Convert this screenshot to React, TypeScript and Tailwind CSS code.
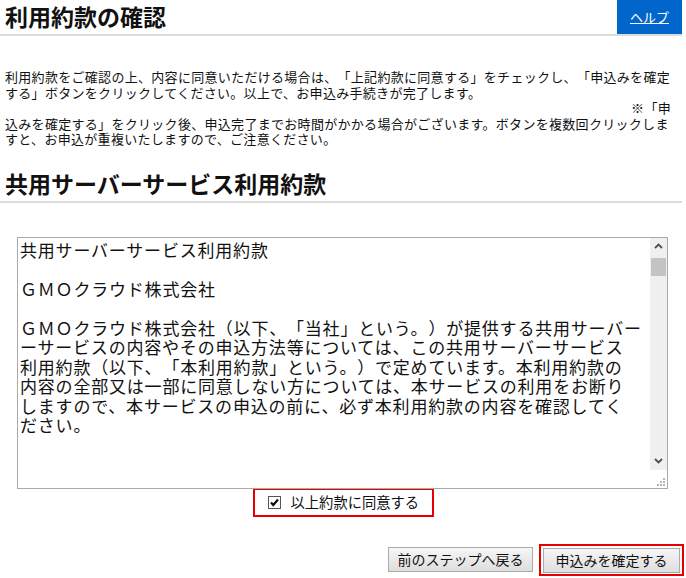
const terms = [
  '共用サーバーサービス利用約款',
  '',
  'ＧＭＯクラウド株式会社',
  '',
  'ＧＭＯクラウド株式会社（以下、「当社」という。）が提供する共用サーバー',
  'ーサービスの内容やその申込方法等については、この共用サーバーサービス',
  '利用約款（以下、「本利用約款」という。）で定めています。本利用約款の',
  '内容の全部又は一部に同意しない方については、本サービスの利用をお断り',
  'しますので、本サービスの申込の前に、必ず本利用約款の内容を確認してく',
  'ださい。',
  '',
  '',
  '',
  '',
  '第１条（適用）',
  '１．本利用約款は、当社が提供する共用サーバーサービスに適用されます。',
  '２．当社が別途定める個別規定は、本利用約款の一部を構成します。',
  '',
  '第２条（定義）',
  '本利用約款において使用する用語の意味は、次の各号に定めるとおりとし',
  'ます。',
  '（１）契約者：本サービスの利用契約を締結した者',
  '（２）利用契約：本利用約款に基づく本サービスの利用に関する契約',
  '（３）申込者：本サービスの利用を申し込む者',
  '',
  '第３条（約款の変更）',
  '当社は、契約者の承諾を得ることなく本利用約款を変更することがありま',
  'す。この場合、本サービスの提供条件は変更後の利用約款によります。',
  '',
  '第４条（通知）',
  '当社から契約者への通知は、当社のウェブサイトへの掲載、電子メールの',
  '送信その他当社が適当と判断する方法により行います。',
  '',
  '第５条（利用申込）',
  '本サービスの利用を希望する者は、本利用約款に同意のうえ、当社所定の',
  '方法により申込みを行うものとします。',
  '',
  '第６条（申込の承諾）',
  '当社は、申込者の申込みを審査のうえ、これを承諾する場合には申込者に',
  '対しその旨を通知します。',
  '',
  '第７条（料金）',
  '契約者は、当社が別に定める料金表に基づき、本サービスの利用料金を支',
  '払うものとします。',
  '',
  '第８条（禁止事項）',
  '契約者は、本サービスの利用にあたり、法令または公序良俗に違反する行',
  '為を行ってはならないものとします。',
  '',
  '附則',
  '本利用約款は、所定の日から実施します。',
].join('\n');

const jp = "font-['Noto_Sans_CJK_JP','Noto_Sans',sans-serif]";

function Chevron({ up }: { up?: boolean }) {
  return (
    <svg width="9" height="6" viewBox="0 0 9 6" className="block">
      <path d={up ? 'M1 5 L4.5 1.5 L8 5' : 'M1 1 L4.5 4.5 L8 1'} fill="none" stroke="#505050" strokeWidth="1.8" />
    </svg>
  );
}

export default function App() {
  return (
    <div className={`w-[686px] bg-white text-black ${jp}`}>
      <div className="flex w-[682px] items-start justify-between border-b-2 border-[#dcdcdc]">
        <h1 className="pl-[5px] text-[23px] font-bold leading-[33px] text-[#111]">利用約款の確認</h1>
        <a href="#" className="flex h-[34px] w-[65px] items-center justify-center bg-[#0066cc] text-[13px] text-white underline">
          ヘルプ
        </a>
      </div>

      <div className="mt-[33px] px-[5px] text-[13px] leading-[15.5px] tracking-[0.3px] text-[#111] [text-spacing-trim:space-all]">
        <div className="whitespace-nowrap">利用約款をご確認の上、内容に同意いただける場合は、「上記約款に同意する」をチェックし、「申込みを確定</div>
        <div className="whitespace-nowrap">する」ボタンをクリックしてください。以上で、お申込み手続きが完了します。</div>
        <div className="pr-[10px] text-right">※「申</div>
        <div className="whitespace-nowrap">込みを確定する」をクリック後、申込完了までお時間がかかる場合がございます。ボタンを複数回クリックしま</div>
        <div className="whitespace-nowrap">すと、お申込が重複いたしますので、ご注意ください。</div>
      </div>

      <h2 className="mt-[21px] w-[682px] border-b-2 border-[#dcdcdc] pb-[3px] pl-[5px] text-[23px] font-bold leading-[30px] text-[#111]">
        共用サーバーサービス利用約款
      </h2>

      <div className="mt-[34px] pl-[17px]">
        <div className="relative h-[252px] w-[651px]">
          <textarea
            readOnly
            wrap="off"
            defaultValue={terms}
            className="block h-full w-full resize-none overflow-hidden border border-[#aaa] py-[2px] pl-[2px] pr-[20px] text-[17px] leading-[19.5px] tracking-[0.8px] text-[#111] outline-none [text-spacing-trim:space-all]"
          />
          <div className="absolute right-[1px] top-[1px] flex h-[232px] w-[17px] flex-col bg-[#f0f0f0]">
            <div className="flex h-[17px] items-center justify-center">
              <Chevron up />
            </div>
            <div className="mx-[1px] mt-[3px] h-[18px] bg-[#c4c4c4]" />
            <div className="flex-1" />
            <div className="flex h-[17px] items-center justify-center">
              <Chevron />
            </div>
          </div>
          <svg width="8" height="8" viewBox="0 0 8 8" className="absolute bottom-[3px] right-[3px]">
            <rect x="6" y="0" width="2" height="2" fill="#b4b4b4" />
            <rect x="3" y="3" width="2" height="2" fill="#b4b4b4" />
            <rect x="6" y="3" width="2" height="2" fill="#b4b4b4" />
            <rect x="0" y="6" width="2" height="2" fill="#b4b4b4" />
            <rect x="3" y="6" width="2" height="2" fill="#b4b4b4" />
            <rect x="6" y="6" width="2" height="2" fill="#b4b4b4" />
          </svg>
        </div>
      </div>

      <div className="-mt-[1px] flex justify-center">
        <label className="flex h-[29px] w-[181px] items-center gap-[10px] border-2 border-[#e60000] pl-[13px] text-[14.3px] text-[#111]">
          <span className="relative flex h-[13px] w-[13px] shrink-0">
            <input type="checkbox" defaultChecked className="m-0 h-[13px] w-[13px] appearance-none border border-[#555] bg-white" />
            <svg width="13" height="13" viewBox="0 0 13 13" className="pointer-events-none absolute left-0 top-0">
              <path d="M3 6.5 L5.3 9 L10 3.5" fill="none" stroke="#111" strokeWidth="2.2" />
            </svg>
          </span>
          以上約款に同意する
        </label>
      </div>

      <div className="mt-[27px] flex items-center justify-end gap-[6px] pr-[2px]">
        <button className="h-[25px] w-[145px] border border-[#aaa] bg-gradient-to-b from-[#f6f6f6] to-[#dedede] text-[14px] text-[#111]">
          前のステップへ戻る
        </button>
        <div className="border-2 border-[#e60000] px-[2px] py-[1px]">
          <button className="h-[25px] w-[137px] border border-[#aaa] bg-gradient-to-b from-[#f6f6f6] to-[#dedede] text-[14px] text-[#111]">
            申込みを確定する
          </button>
        </div>
      </div>
    </div>
  );
}
